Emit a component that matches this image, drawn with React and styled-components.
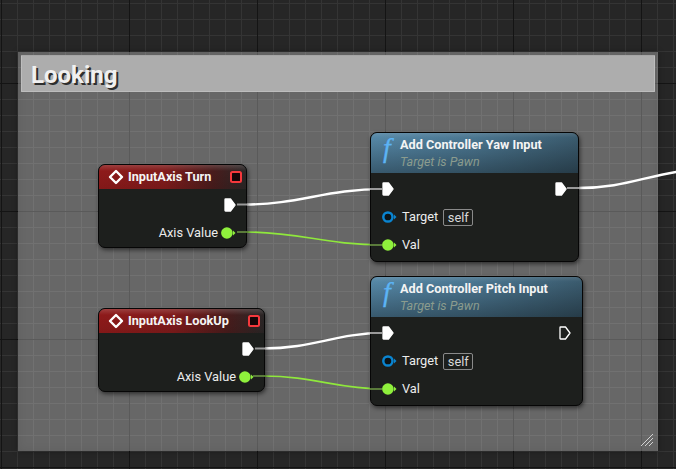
import React from "react";
import styled, { createGlobalStyle } from "styled-components";

const Global = createGlobalStyle`
  html, body { margin: 0; padding: 0; background: #262626; }
  #root { width: 676px; height: 469px; overflow: hidden; }
`;

const Canvas = styled.div`
  position: relative;
  width: 676px;
  height: 469px;
  overflow: hidden;
  font-family: Roboto, "Liberation Sans", sans-serif;
  background-color: #262626;
  background-image:
    linear-gradient(to right, #141414 1px, transparent 1px),
    linear-gradient(to bottom, #141414 1px, transparent 1px),
    linear-gradient(to right, #343434 1px, transparent 1px),
    linear-gradient(to bottom, #343434 1px, transparent 1px);
  background-size: 128px 128px, 128px 128px, 16px 16px, 16px 16px;
  background-position: 1px 0, 0 83px, 1px 0, 0 3px;
`;

const Comment = styled.section`
  position: absolute;
  left: 18px;
  top: 52px;
  width: 640px;
  height: 399px;
  box-sizing: border-box;
  padding: 3px;
  background: rgba(255, 255, 255, 0.3);
  box-shadow: 0 0 6px rgba(0, 0, 0, 0.35), inset 0 0 10px rgba(0, 0, 0, 0.08);
`;

const CommentTitle = styled.h2`
  margin: 0;
  height: 37px;
  box-sizing: border-box;
  padding: 6px 0 0 9px;
  background: #adadad;
  border: 1px solid #bdbdbd;
  border-top-color: #a6a6a6;
  border-radius: 1px;
  color: #f0f0f0;
  font: 700 24px/26px Roboto, "Liberation Sans", sans-serif;
  text-shadow: 2px 2px 0 #2e2e2e;
`;

const ResizeGrip = styled.svg`
  position: absolute;
  right: 3px;
  bottom: 3px;
`;

const Wires = styled.svg`
  position: absolute;
  left: 0;
  top: 0;
  pointer-events: none;
`;

const Node = styled.article`
  position: absolute;
  left: ${(p) => p.$x}px;
  top: ${(p) => p.$y}px;
  width: ${(p) => p.$w}px;
  box-sizing: border-box;
  background: #1d1f1d;
  border: 1px solid #060606;
  border-radius: 7px;
  box-shadow: 1px 2px 4px rgba(0, 0, 0, 0.55);
  overflow: hidden;
  color: #f2f2f2;
`;

const EventHeader = styled.header`
  display: flex;
  align-items: center;
  height: 24px;
  box-sizing: border-box;
  padding: 0 4px 0 9px;
  gap: 4px;
  background:
    linear-gradient(to bottom, rgba(255, 255, 255, 0.16), rgba(255, 255, 255, 0) 25%, rgba(0, 0, 0, 0.08)),
    linear-gradient(to right, #8e1a1a 0%, #7f1b1b 45%, #481c1c 78%, #2a2626 100%);
`;

const FunctionHeader = styled.header`
  position: relative;
  height: 40px;
  box-sizing: border-box;
  padding: 4px 0 0 29px;
  background:
    linear-gradient(to bottom, rgba(255, 255, 255, 0.1), rgba(255, 255, 255, 0) 12%, rgba(0, 0, 0, 0.34)),
    linear-gradient(to right, #5587a6 0%, #4b7690 50%, #3a5a6d 100%);
`;

const FunctionGlyph = styled.span`
  position: absolute;
  left: 12px;
  top: 1px;
  font: italic 400 28px/28px "Liberation Serif", serif;
  color: #5cb4f5;
  -webkit-text-stroke: 0.3px #5cb4f5;
`;

const Title = styled.div`
  font: 700 12.7px/16px Roboto, "Liberation Sans", sans-serif;
  color: #f4f4f4;
  white-space: nowrap;
  flex: 1;
`;

const Subtitle = styled.div`
  font: italic 400 12.5px/15px Roboto, "Liberation Sans", sans-serif;
  color: #8b9c8e;
  margin-top: 1px;
  white-space: nowrap;
`;

const EventBody = styled.div`
  display: flex;
  flex-direction: column;
  align-items: flex-end;
  gap: 14px;
  padding: 9px 10px 7px 0;
`;

const FunctionBody = styled.div`
  display: flex;
  flex-direction: column;
  gap: 14px;
  padding: 9px 11px 9px 11px;
`;

const Row = styled.div`
  display: flex;
  align-items: center;
  height: 14px;
  gap: ${(p) => p.$gap ?? 5}px;
  justify-content: ${(p) => (p.$between ? "space-between" : "flex-start")};
  font: 400 12.8px/14px Roboto, "Liberation Sans", sans-serif;
  color: #ececec;
  white-space: nowrap;
`;

const SelfBox = styled.span`
  display: inline-block;
  box-sizing: border-box;
  height: 17px;
  padding: 0 3.5px;
  border: 1px solid #8a8a8a;
  border-radius: 2px;
  font: 400 12.8px/15px Roboto, "Liberation Sans", sans-serif;
  color: #d8d8d8;
`;

const ExecPin = ({ hollow }) => (
  <svg width="12" height="14" viewBox="0 0 12 14" style={{ flex: "none" }}>
    <path
      d="M1.5 1H6.5L11 7L6.5 13H1.5Q1 13 1 12.5V1.5Q1 1 1.5 1Z"
      fill={hollow ? "none" : "#fff"}
      stroke="#fff"
      strokeWidth="1.3"
      strokeLinejoin="round"
    />
  </svg>
);

const DataPin = ({ color, hollow }) => (
  <svg width="15" height="12" viewBox="0 0 15 12" style={{ flex: "none" }}>
    <circle
      cx="5.9"
      cy="6"
      r={hollow ? 4.6 : 5.8}
      fill={hollow ? "#0c1418" : color}
      stroke={hollow ? color : "none"}
      strokeWidth={hollow ? 2.5 : 0}
    />
    <path d="M12 3.5L14.5 6L12 8.5Z" fill={color} />
  </svg>
);

const EventIcon = () => (
  <svg width="16" height="16" viewBox="0 0 16 16" style={{ flex: "none" }}>
    <path d="M8 2L14 8L8 14L2 8Z" fill="none" stroke="#fff" strokeWidth="2.4" strokeLinejoin="round" />
  </svg>
);

const DelegateIcon = () => (
  <svg width="12" height="12" viewBox="0 0 12 12" style={{ flex: "none" }}>
    <rect x="1" y="1" width="10" height="10" rx="1.5" fill="#160608" stroke="#f5383c" strokeWidth="2" />
  </svg>
);

const InputEvent = ({ x, y, w, title }) => (
  <Node $x={x} $y={y} $w={w}>
    <EventHeader>
      <EventIcon />
      <Title>{title}</Title>
      <DelegateIcon />
    </EventHeader>
    <EventBody>
      <Row><ExecPin /></Row>
      <Row $gap={3}>Axis Value<DataPin color="#8ff03c" /></Row>
    </EventBody>
  </Node>
);

const FunctionNode = ({ x, y, w, title, hollowOut }) => (
  <Node $x={x} $y={y} $w={w}>
    <FunctionHeader>
      <FunctionGlyph>f</FunctionGlyph>
      <Title>{title}</Title>
      <Subtitle>Target is Pawn</Subtitle>
    </FunctionHeader>
    <FunctionBody>
      <Row $between><ExecPin /><ExecPin hollow={hollowOut} /></Row>
      <Row><DataPin color="#0a84d0" hollow />Target<SelfBox>self</SelfBox></Row>
      <Row><DataPin color="#8ff03c" />Val</Row>
    </FunctionBody>
  </Node>
);

export default function App() {
  return (
    <Canvas>
      <Global />
      <Comment>
        <CommentTitle>Looking</CommentTitle>
        <ResizeGrip width="16" height="16" viewBox="0 0 16 16">
          <path d="M2 14L14 2M6 14L14 6M10 14L14 10" stroke="#d2d2d2" strokeWidth="1" />
        </ResizeGrip>
      </Comment>
      <Wires width="676" height="469" viewBox="0 0 676 469">
        <g fill="none" strokeLinecap="round">
          <path d="M245 204.5C300 204.5 325 189 384 189" stroke="#fff" strokeWidth="2.4" />
          <path d="M578 188C620 188 640 178 676 172" stroke="#fff" strokeWidth="2.4" />
          <path d="M245 232C300 232 325 245 384 245" stroke="#8fe83c" strokeWidth="1.6" />
          <path d="M263 348.5C315 348.5 335 333 384 333" stroke="#fff" strokeWidth="2.4" />
          <path d="M263 376C315 376 335 389 384 389" stroke="#8fe83c" strokeWidth="1.6" />
        </g>
      </Wires>
      <InputEvent x={98} y={164} w={149} title="InputAxis Turn" />
      <InputEvent x={98} y={308} w={167} title="InputAxis LookUp" />
      <FunctionNode x={370} y={132} w={209} title="Add Controller Yaw Input" />
      <FunctionNode x={370} y={276} w={213} title="Add Controller Pitch Input" hollowOut />
      <Wires width="676" height="469" viewBox="0 0 676 469">
        <g fill="none" strokeWidth="2">
          <path d="M237 204.5H247M370 189H382M567 188H579M255 348.5H265M370 333H382" stroke="#9a9a9a" />
          <path d="M247 232H237" stroke="#6f9a45" strokeWidth="1.5" />
          <path d="M265 376H253M370 245H382M370 389H382" stroke="#6f9a45" strokeWidth="1.5" />
        </g>
      </Wires>
    </Canvas>
  );
}
